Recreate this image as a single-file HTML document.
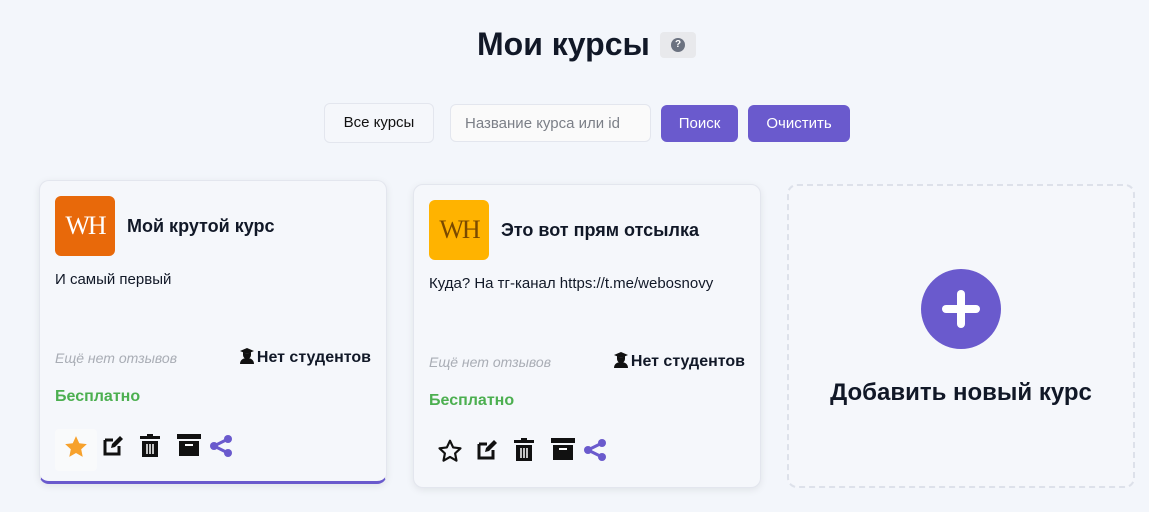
<!DOCTYPE html><html><head><meta charset="utf-8"><style>
body{margin:0;width:1149px;height:512px;background:#f3f6fb;font-family:"Liberation Sans",sans-serif;position:relative;overflow:hidden;color:#111827}
.abs{position:absolute}
h1{position:absolute;left:477px;top:24px;margin:0;font-size:32px;font-weight:bold;color:#111827;line-height:40px}
.help{left:660px;top:32px;width:36px;height:26px;background:#e8e9ec;border-radius:4px}
.help span{position:absolute;left:11px;top:6px;width:14px;height:14px;border-radius:50%;background:#6b7280;color:#fff;font-size:10px;font-weight:bold;text-align:center;line-height:14px}
.btn{position:absolute;border-radius:6px;font-size:15px;text-align:center}
.card{position:absolute;width:348px;height:304px;background:#f5f7fb;border-radius:10px;border:1px solid #e3e6ee;box-shadow:0 2px 8px rgba(0,0,0,.08);box-sizing:border-box;overflow:hidden}
.logo{position:absolute;left:15px;top:15px;width:60px;height:60px;border-radius:6px;color:#fff;font-family:"Liberation Serif",serif;font-size:26px;text-align:center;line-height:60px;letter-spacing:-2px}
.title{position:absolute;left:87px;top:35px;font-size:18px;font-weight:bold}
.desc{position:absolute;left:15px;top:90px;font-size:15px}
.rev{position:absolute;left:15px;top:169px;font-size:14px;font-style:italic;color:#a9adb5}
.stu{position:absolute;right:15px;top:167px;font-size:16px;font-weight:bold}
.stu svg{vertical-align:-2px;margin-right:3px}
.free{position:absolute;left:15px;top:207px;font-size:16px;font-weight:bold;color:#4caf50}
.icons{position:absolute;left:23px;top:253px}
.icons svg{position:absolute;top:0}
</style></head><body>
<h1>Мои курсы</h1>
<div class="abs help"><span>?</span></div>
<div class="btn" style="left:324px;top:103px;width:108px;height:38px;border:1px solid #e3e6ee;background:#f5f7fb;line-height:38px;color:#111">Все курсы</div>
<div class="btn" style="left:450px;top:104px;height:38px;border:1px solid #e3e6ee;background:#fafafa;line-height:38px;color:#7b7f87;text-align:left;padding-left:14px;box-sizing:border-box;width:201px">Название курса или id</div>
<div class="btn" style="left:661px;top:105px;width:77px;height:37px;background:#6a5acd;color:#fff;line-height:37px">Поиск</div>
<div class="btn" style="left:748px;top:105px;width:102px;height:37px;background:#6a5acd;color:#fff;line-height:37px">Очистить</div>

<div class="card" style="left:39px;top:180px;border-bottom:3px solid #6a5acd">
<div class="logo" style="background:#e8690a">WH</div>
<div class="title">Мой крутой курс</div>
<div class="desc">И самый первый</div>
<div class="rev">Ещё нет отзывов</div>
<div class="stu"><svg width="14" height="16" viewBox="0 0 14 16"><path d="M0 3L7 0l7 3-7 3z" fill="#111"/><path d="M3 4v3a4 4 0 0 0 8 0V4L7 6z" fill="#111"/><path d="M0 16c0-4 3-6 7-6s7 2 7 6z" fill="#111"/></svg>Нет студентов</div>
<div class="free">Бесплатно</div>
<div class="abs" style="left:15px;top:248px;width:42px;height:42px;background:#f9fafb;border-radius:4px"></div>
<div class="icons">
<svg style="left:0" width="26" height="26" viewBox="0 0 24 24"><path d="M12 2l3 6.5 7 .8-5.2 4.8 1.4 7L12 17.5 5.8 21.1l1.4-7L2 9.3l7-.8z" fill="#f7a12c"/></svg>
<svg style="left:38px" width="24" height="24" viewBox="0 0 24 24"><path d="M4 6h8M4 6v14h14v-8" stroke="#111" stroke-width="3" fill="none"/><path d="M10 14l1-4 8-8 3 3-8 8z" fill="#111"/></svg>
<svg style="left:76px" width="22" height="24" viewBox="0 0 22 24"><rect x="1" y="2" width="20" height="3" fill="#111"/><rect x="8" y="0" width="6" height="3" fill="#111"/><path d="M3 7h16v16H3z" fill="#111"/><path d="M8 10v10M11 10v10M14 10v10" stroke="#fff" stroke-width="1.5"/></svg>
<svg style="left:114px" width="24" height="22" viewBox="0 0 24 22"><rect x="0" y="0" width="24" height="5" fill="#111"/><rect x="2" y="7" width="20" height="15" fill="#111"/><rect x="8" y="10" width="8" height="2" fill="#fff"/></svg>
<svg style="left:146px" width="24" height="24" viewBox="0 0 24 24"><circle cx="19" cy="5" r="4" fill="#6a5acd"/><circle cx="5" cy="12" r="4" fill="#6a5acd"/><circle cx="19" cy="19" r="4" fill="#6a5acd"/><path d="M5 12L19 5M5 12l14 7" stroke="#6a5acd" stroke-width="3"/></svg>
</div>
</div>

<div class="card" style="left:413px;top:184px">
<div class="logo" style="background:#ffb300;color:#7a4a00">WH</div>
<div class="title">Это вот прям отсылка</div>
<div class="desc">Куда? На тг-канал https://t.me/webosnovy</div>
<div class="rev">Ещё нет отзывов</div>
<div class="stu"><svg width="14" height="16" viewBox="0 0 14 16"><path d="M0 3L7 0l7 3-7 3z" fill="#111"/><path d="M3 4v3a4 4 0 0 0 8 0V4L7 6z" fill="#111"/><path d="M0 16c0-4 3-6 7-6s7 2 7 6z" fill="#111"/></svg>Нет студентов</div>
<div class="free">Бесплатно</div>
<div class="icons">
<svg style="left:0" width="26" height="26" viewBox="0 0 24 24"><path d="M12 2.5l2.9 6.2 6.8.8-5 4.7 1.3 6.7L12 17.5l-6 3.4 1.3-6.7-5-4.7 6.8-.8z" fill="none" stroke="#111" stroke-width="2" stroke-linejoin="round"/></svg>
<svg style="left:38px" width="24" height="24" viewBox="0 0 24 24"><path d="M4 6h8M4 6v14h14v-8" stroke="#111" stroke-width="3" fill="none"/><path d="M10 14l1-4 8-8 3 3-8 8z" fill="#111"/></svg>
<svg style="left:76px" width="22" height="24" viewBox="0 0 22 24"><rect x="1" y="2" width="20" height="3" fill="#111"/><rect x="8" y="0" width="6" height="3" fill="#111"/><path d="M3 7h16v16H3z" fill="#111"/><path d="M8 10v10M11 10v10M14 10v10" stroke="#fff" stroke-width="1.5"/></svg>
<svg style="left:114px" width="24" height="22" viewBox="0 0 24 22"><rect x="0" y="0" width="24" height="5" fill="#111"/><rect x="2" y="7" width="20" height="15" fill="#111"/><rect x="8" y="10" width="8" height="2" fill="#fff"/></svg>
<svg style="left:146px" width="24" height="24" viewBox="0 0 24 24"><circle cx="19" cy="5" r="4" fill="#6a5acd"/><circle cx="5" cy="12" r="4" fill="#6a5acd"/><circle cx="19" cy="19" r="4" fill="#6a5acd"/><path d="M5 12L19 5M5 12l14 7" stroke="#6a5acd" stroke-width="3"/></svg>
</div>
</div>

<div class="card" style="left:787px;top:184px;border:2px dashed #dde1ea;box-shadow:none;background:#f5f7fb">
<div class="abs" style="left:132px;top:83px;width:80px;height:80px;border-radius:50%;background:#6a5acd"></div>
<div class="abs" style="left:153px;top:119px;width:38px;height:8px;background:#fff;border-radius:4px"></div>
<div class="abs" style="left:168px;top:104px;width:8px;height:38px;background:#fff;border-radius:4px"></div>
<div class="abs" style="left:0;width:344px;top:193px;text-align:center;font-size:24px;font-weight:bold">Добавить новый курс</div>
</div>
</body></html>
